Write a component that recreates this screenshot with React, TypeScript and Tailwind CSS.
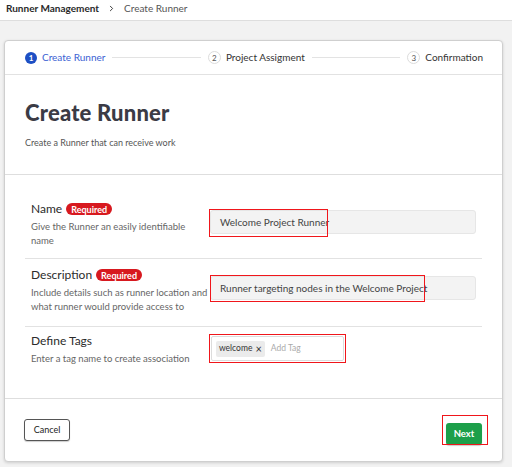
import { ChevronRight } from 'lucide-react';

const font = { fontFamily: 'Lato, "Open Sans", sans-serif' };

function Step({ n, label, active }: { n: number; label: string; active?: boolean }) {
    return (
        <div className="flex items-center gap-[5px] shrink-0">
            <span
                className={`flex items-center justify-center rounded-full text-[8px] leading-none ${
                    active ? 'w-[12px] h-[12px] bg-[#1d4fc4] text-white font-bold' : 'w-[13px] h-[13px] border border-[#dcdcdc] text-[#555]'
                }`}
            >
                {n}
            </span>
            <span className={`text-[10px] ${active ? 'text-[#3b62d3]' : 'text-[#333]'}`}>{label}</span>
        </div>
    );
}

function Required() {
    return (
        <span className="ml-[4px] inline-flex items-center h-[12px] px-[5px] rounded-full bg-[#d7191f] text-white text-[9px] font-bold leading-none">
            Required
        </span>
    );
}

export default function App() {
    return (
        <div className="w-[512px] h-[467px] bg-[#f2f2f2] overflow-hidden" style={font}>
            {/* breadcrumb */}
            <div className="h-[21px] bg-white border-b border-[#dedede] flex items-center pl-[6px] pb-[4px] text-[10px]">
                <span className="font-bold text-[#2a2a2a]">Runner Management</span>
                <ChevronRight className="w-[9px] h-[9px] mx-[8px] text-[#333]" strokeWidth={2.5} />
                <span className="text-[#555]">Create Runner</span>
            </div>

            <div className="ml-[4px] mt-[19px] w-[499px] h-[422px] bg-white border border-[#cfcfcf] rounded-[4px] shadow-[0_1px_3px_rgba(0,0,0,0.15)] flex flex-col">
                {/* stepper */}
                <div className="h-[34px] flex items-center pl-[20px] pr-[19px] border-b border-[#e2e2e2]">
                    <Step n={1} label="Create Runner" active />
                    <div className="flex-1 h-px bg-[#e3e3e3] mx-[7px]" />
                    <Step n={2} label="Project Assigment" />
                    <div className="flex-1 h-px bg-[#e3e3e3] mx-[7px]" />
                    <Step n={3} label="Confirmation" />
                </div>

                {/* title */}
                <div className="h-[100px] border-b border-[#dedede] px-[20px] pt-[25px]">
                    <h1 className="text-[22px] leading-[26px] font-black text-[#3b3b45] tracking-[0.2px]">Create Runner</h1>
                    <p className="mt-[10px] text-[9px] text-[#555]">Create a Runner that can receive work</p>
                </div>

                {/* form */}
                <div className="flex-1 px-[20px] pt-[26px]">
                    <div className="flex border-b border-[#e2e2e2] pl-[6px] pr-[6px] pb-[10px]">
                        <div className="w-[179px] shrink-0">
                            <div className="flex items-center h-[16px] text-[12px] text-[#2b2b2b]">
                                Name <Required />
                            </div>
                            <p className="mt-[3px] text-[9.5px] leading-[14px] text-[#666] pr-[10px]">
                                Give the Runner an easily identifiable name
                            </p>
                        </div>
                        <div className="relative flex-1 mt-[9px]">
                            <div className="h-[24px] bg-[#f3f3f3] border border-[#e6e6e6] rounded-[3px] flex items-center pl-[9px] text-[10px] text-[#444]">
                                Welcome Project Runner
                            </div>
                            <div className="absolute left-[-1px] top-[-1px] w-[119px] h-[28px] border-[1.5px] border-[#f0161b]" />
                        </div>
                    </div>

                    <div className="flex border-b border-[#e2e2e2] pl-[6px] pr-[6px] pt-[8px] pb-[12px]">
                        <div className="w-[179px] shrink-0">
                            <div className="flex items-center h-[16px] text-[12px] text-[#2b2b2b]">
                                Description <Required />
                            </div>
                            <p className="mt-[3px] text-[9.5px] leading-[14px] text-[#666]">
                                Include details such as runner location and what runner would provide access to
                            </p>
                        </div>
                        <div className="relative flex-1 mt-[9px]">
                            <div className="h-[24px] bg-[#f3f3f3] border border-[#e6e6e6] rounded-[3px] flex items-center pl-[9px] text-[10px] text-[#444]">
                                Runner targeting nodes in the Welcome Project
                            </div>
                            <div className="absolute left-0 top-[-1px] w-[215px] h-[27px] border-[1.5px] border-[#f0161b]" />
                        </div>
                    </div>

                    <div className="flex pl-[6px] pt-[6px]">
                        <div className="w-[179px] shrink-0">
                            <div className="flex items-center h-[16px] text-[12px] text-[#2b2b2b]">Define Tags</div>
                            <p className="mt-[3px] text-[9.5px] leading-[14px] text-[#666]">
                                Enter a tag name to create association
                            </p>
                        </div>
                        <div className="relative mt-[3px] ml-[1px]">
                            <div className="w-[133px] h-[25px] bg-white border border-[#dcdcdc] rounded-[2px] flex items-center pl-[4px] text-[8.5px]">
                                <span className="h-[16px] bg-[#ebebeb] rounded-[2px] px-[3px] flex items-center gap-[3px] text-[#333]">
                                    welcome <span className="text-[11px] leading-none">×</span>
                                </span>
                                <span className="ml-[6px] text-[#aaa]">Add Tag</span>
                            </div>
                            <div className="absolute left-[-2px] top-[-2px] w-[137px] h-[29px] border-[1.5px] border-[#f0161b]" />
                        </div>
                    </div>
                </div>

                {/* footer */}
                <div className="h-[63px] border-t border-[#dedede] flex items-start justify-between pl-[19px] pr-[20px] pt-[20px]">
                    <button className="w-[46px] h-[22px] border border-[#555] rounded-[3px] bg-white text-[9px] text-[#222] shadow-[0_1px_1px_rgba(0,0,0,0.2)]">
                        Cancel
                    </button>
                    <div className="relative">
                        <button className="w-[36px] h-[22px] rounded-[3px] bg-[#1d9f4a] text-white text-[9.5px] font-bold shadow-[0_1px_1px_rgba(0,0,0,0.2)]">
                            Next
                        </button>
                        <div className="absolute left-[-4px] top-[-4px] w-[46px] h-[30px] border-[1.5px] border-[#f0161b]" />
                    </div>
                </div>
            </div>
        </div>
    );
}
